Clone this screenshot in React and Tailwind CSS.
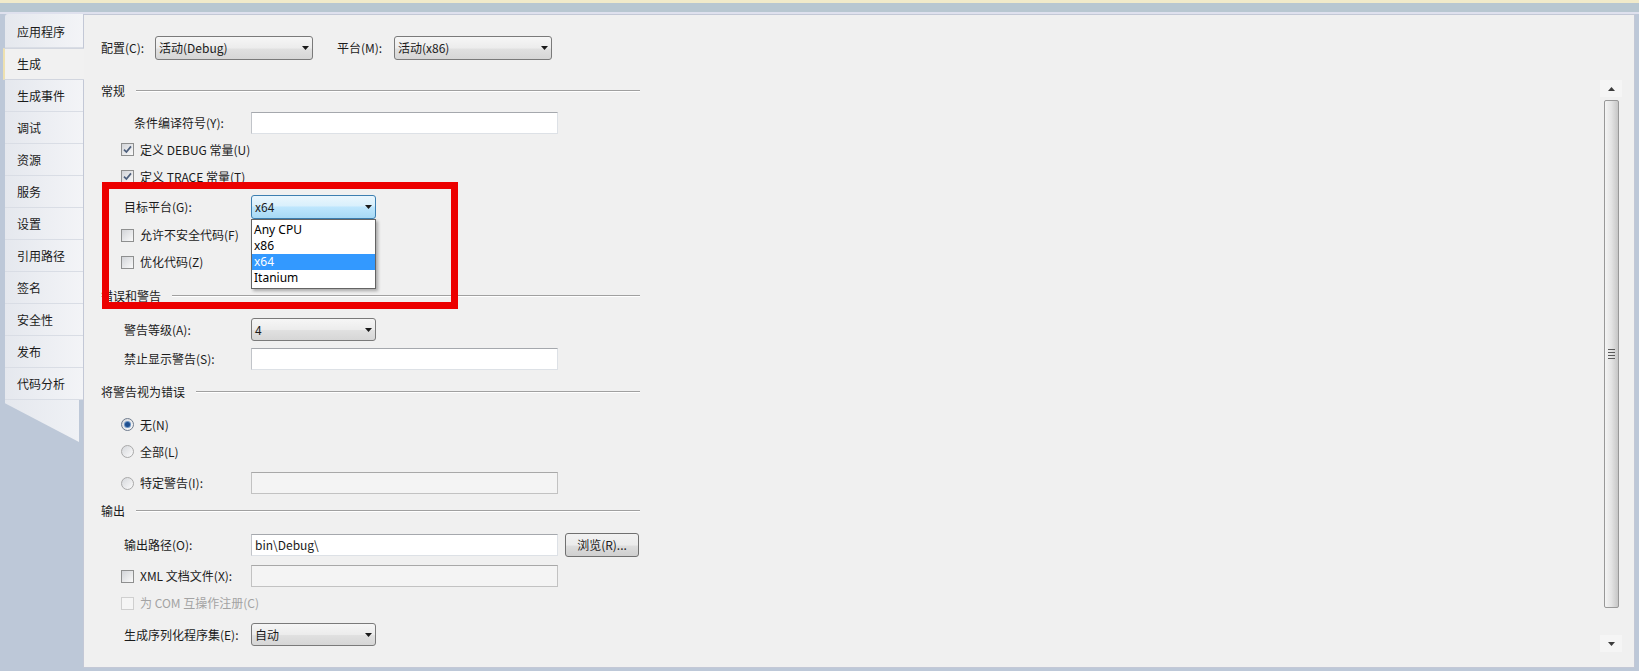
import React from 'react';

const tabs = ['应用程序', '生成', '生成事件', '调试', '资源', '服务', '设置', '引用路径', '签名', '安全性', '发布', '代码分析'];

const Arrow = ({ up, color = '#1a1a1a' }) => (
  <svg width="7" height="4" viewBox="0 0 7 4">
    <path d={up ? 'M0 4h7L3.5 0z' : 'M0 0h7L3.5 4z'} fill={color} />
  </svg>
);

const Select = ({ value, className = '', focused, children }) => (
  <div
    className={`relative h-full flex items-center justify-between rounded-[3px] border pl-[3px] pr-[3px] ${
      focused
        ? 'border-[#3c7fb1] bg-[linear-gradient(#eaf6fd_0%,#d9f0fc_45%,#bee6fd_50%,#a7d9f5_100%)]'
        : 'border-[#7a7a7a] bg-[linear-gradient(#f6f6f6_0%,#ececec_50%,#e0e0e0_55%,#d6d6d6_100%)]'
    } ${className}`}
  >
    <span className="leading-none">{value}</span>
    <Arrow />
    {children}
  </div>
);

const TextBox = ({ value, disabled, className = 'w-[307px]' }) => (
  <div
    className={`h-full flex items-center pl-[3px] border ${
      disabled
        ? 'bg-[#f4f4f4] border-[#c2c2c2] border-t-[#a8a8a8]'
        : 'bg-white border-[#dde1e6] border-t-[#a5a8ad] border-l-[#c1c4c9]'
    } ${className}`}
  >
    {value}
  </div>
);

const Checkbox = ({ checked, disabled }) => (
  <span
    className={`w-[13px] h-[13px] shrink-0 border flex items-center justify-center ${
      disabled
        ? 'border-[#cfcfcf] bg-[#f5f5f5]'
        : 'border-[#8e8f8f] bg-gradient-to-br from-[#d2d4d8] to-[#fafafa]'
    }`}
  >
    {checked && (
      <svg width="9" height="9" viewBox="0 0 9 9">
        <path d="M1 4.6 L3.4 7 L8 1.4" stroke="#4d5f7c" strokeWidth="1.7" fill="none" />
      </svg>
    )}
  </span>
);

const Radio = ({ checked }) => (
  <span
    className={`w-[13px] h-[13px] shrink-0 rounded-full border flex items-center justify-center bg-gradient-to-br from-[#d6d8dc] to-[#fbfbfb] ${
      checked ? 'border-[#6f7c8e]' : 'border-[#a9a9a9]'
    }`}
  >
    {checked && <span className="w-[5px] h-[5px] rounded-full bg-[#1e4f8f] ring-1 ring-[#6d95c4]" />}
  </span>
);

const Section = ({ title, mt }) => (
  <div className={`flex items-center h-[20px] pl-[17px] w-[556px] ${mt}`}>
    <span>{title}</span>
    <span className="flex-1 ml-[11px] h-[2px] border-t border-[#a0a0a0] border-b border-b-white" />
  </div>
);

const App = () => {
  return (
    <div className="relative w-[1639px] h-[671px] overflow-hidden flex flex-col bg-[#bdc8d8] text-[12px] text-[#1b1b1b] font-['Noto_Sans_CJK_SC','Noto_Sans',sans-serif]">
      <div className="h-[3px] bg-[#f1eaca]" />
      <div className="h-[9px] bg-[#b8c7d1]" />
      <div className="h-[2px] bg-[#dfe1ee]" />

      <div className="flex flex-1 min-h-0">
        {/* tab strip */}
        <div className="w-[83px] flex flex-col">
          {tabs.map((t, i) =>
            t === '生成' ? (
              <div
                key={t}
                className="relative z-10 ml-[3px] w-[81px] h-[32px] flex items-center pl-[12px] bg-[#f1f1f1] border-l-[2px] border-l-[#eee1b0] border-y border-y-[#d2d6df]"
              >
                {t}
              </div>
            ) : (
              <div
                key={t}
                className={`ml-[5px] w-[78px] flex items-center pl-[12px] bg-gradient-to-r from-[#e5e8ee] to-[#f3f4f7] border-b border-[#d9dde5] ${
                  i === 0 ? 'h-[34px] pt-[3px] rounded-tl-[3px]' : 'h-[32px]'
                }`}
              >
                {t}
              </div>
            )
          )}
          <div className="ml-[5px] w-[74px] h-[42px] bg-gradient-to-r from-[#e5e8ee] to-[#eff1f5] [clip-path:polygon(0_0,100%_0,100%_100%,0_8%)]" />
        </div>

        {/* main panel */}
        <div className="flex-1 mr-[4px] mb-[3px] bg-[#f0f0f0] border border-[#c3c8d6] flex">
          <div className="flex-1 flex flex-col">
            <div className="flex items-center h-[24px] pl-[17px] mt-[21px]">
              <span className="w-[54px]">配置(C):</span>
              <Select value="活动(Debug)" className="w-[158px]" />
              <span className="ml-[24px] w-[57px]">平台(M):</span>
              <Select value="活动(x86)" className="w-[158px]" />
            </div>

            <Section title="常规" mt="mt-[21px]" />

            <div className="flex items-center h-[22px] pl-[50px] mt-[11px]">
              <span className="w-[117px]">条件编译符号(Y):</span>
              <TextBox />
            </div>

            <div className="flex items-center h-[21px] pl-[37px] mt-[5px]">
              <Checkbox checked />
              <span className="ml-[6px]">定义 DEBUG 常量(U)</span>
            </div>
            <div className="flex items-center h-[21px] pl-[37px] mt-[6px]">
              <Checkbox checked />
              <span className="ml-[6px]">定义 TRACE 常量(T)</span>
            </div>

            <div className="flex items-center h-[24px] pl-[40px] mt-[8px]">
              <span className="w-[127px]">目标平台(G):</span>
              <Select value="x64" className="w-[125px]" focused>
                <div className="absolute left-[-1px] top-[23px] w-[125px] h-[70px] z-20 bg-white border border-[#646464] pt-[2px] shadow-[2px_2px_3px_rgba(0,0,0,0.3)] font-['Noto_Sans',sans-serif] text-[12px] text-black">
                  <div className="h-[16px] leading-[16px] pl-[2px]">Any CPU</div>
                  <div className="h-[16px] leading-[16px] pl-[2px]">x86</div>
                  <div className="h-[16px] leading-[16px] pl-[2px] bg-[#3399ff] text-white">x64</div>
                  <div className="h-[16px] leading-[16px] pl-[2px]">Itanium</div>
                </div>
              </Select>
            </div>

            <div className="flex items-center h-[22px] pl-[37px] mt-[5px]">
              <Checkbox />
              <span className="ml-[6px]">允许不安全代码(F)</span>
            </div>
            <div className="flex items-center h-[22px] pl-[37px] mt-[5px]">
              <Checkbox />
              <span className="ml-[6px]">优化代码(Z)</span>
            </div>

            <Section title="错误和警告" mt="mt-[13px]" />

            <div className="flex items-center h-[23px] pl-[40px] mt-[12px]">
              <span className="w-[127px]">警告等级(A):</span>
              <Select value="4" className="w-[125px]" />
            </div>
            <div className="flex items-center h-[22px] pl-[40px] mt-[7px]">
              <span className="w-[127px]">禁止显示警告(S):</span>
              <TextBox />
            </div>

            <Section title="将警告视为错误" mt="mt-[12px]" />

            <div className="flex items-center h-[21px] pl-[37px] mt-[12px]">
              <Radio checked />
              <span className="ml-[6px]">无(N)</span>
            </div>
            <div className="flex items-center h-[21px] pl-[37px] mt-[6px]">
              <Radio />
              <span className="ml-[6px]">全部(L)</span>
            </div>
            <div className="flex items-center h-[22px] pl-[37px] mt-[10px]">
              <Radio />
              <span className="ml-[6px] w-[111px]">特定警告(I):</span>
              <TextBox disabled />
            </div>

            <Section title="输出" mt="mt-[7px]" />

            <div className="flex items-center h-[22px] pl-[40px] mt-[13px]">
              <span className="w-[127px]">输出路径(O):</span>
              <TextBox value="bin\Debug\" />
              <button className="ml-[7px] w-[74px] h-[24px] rounded-[3px] border border-[#707070] bg-[linear-gradient(#f2f2f2_0%,#ebebeb_50%,#dddddd_55%,#cfcfcf_100%)] text-[12px]">
                浏览(R)...
              </button>
            </div>
            <div className="flex items-center h-[22px] pl-[37px] mt-[9px]">
              <Checkbox />
              <span className="ml-[6px] w-[111px]">XML 文档文件(X):</span>
              <TextBox disabled />
            </div>
            <div className="flex items-center h-[20px] pl-[37px] mt-[6px] text-[#a3a3a3]">
              <Checkbox disabled />
              <span className="ml-[6px]">为 COM 互操作注册(C)</span>
            </div>

            <div className="flex items-center h-[23px] pl-[40px] mt-[10px]">
              <span className="w-[127px]">生成序列化程序集(E):</span>
              <Select value="自动" className="w-[125px]" />
            </div>
          </div>

          {/* scrollbar */}
          <div className="w-[22px] mr-[12px] mt-[65px] mb-[15px] flex flex-col">
            <div className="h-[17px] flex items-center justify-center bg-[#f5f5f5]">
              <Arrow up color="#3c3c3c" />
            </div>
            <div className="mt-[3px] ml-[4px] w-[15px] h-[508px] rounded-[2px] border border-[#989898] bg-gradient-to-r from-[#f4f4f4] via-[#e3e3e3] to-[#c6c6c6] flex flex-col items-center justify-center gap-[2px]">
              <span className="w-[7px] h-px bg-[#5a5a5a]" />
              <span className="w-[7px] h-px bg-[#5a5a5a]" />
              <span className="w-[7px] h-px bg-[#5a5a5a]" />
              <span className="w-[7px] h-px bg-[#5a5a5a]" />
            </div>
            <div className="flex-1" />
            <div className="h-[17px] flex items-center justify-center bg-[#f5f5f5]">
              <Arrow color="#3c3c3c" />
            </div>
          </div>
        </div>
      </div>

      {/* red highlight annotation */}
      <div className="absolute left-[102px] top-[182px] w-[356px] h-[127px] border-[7px] border-[#ec0000] z-30 pointer-events-none" />
    </div>
  );
};

export default App;
